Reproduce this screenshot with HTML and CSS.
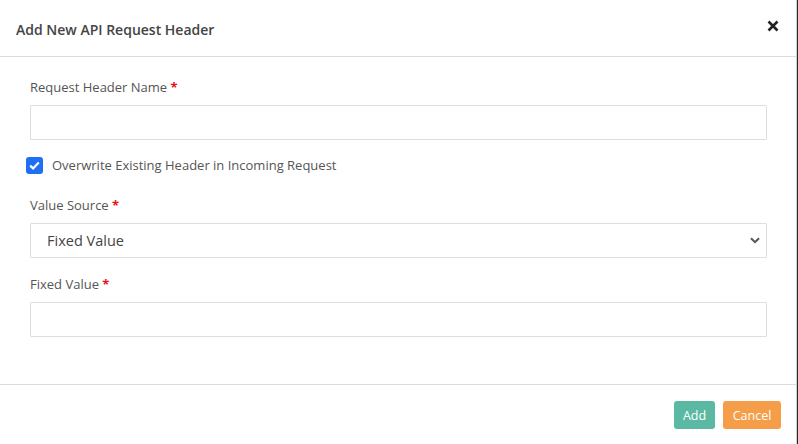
FILE: index.html
```html
<!DOCTYPE html>
<html>
<head>
<meta charset="utf-8">
<link rel="stylesheet" href="styles.css">
</head>
<body>
<div class="page">
  <div class="modal">
    <div class="modal-header">
      <h4 class="modal-title">Add New API Request Header</h4>
      <button class="close" aria-label="Close">
        <svg width="12" height="12" viewBox="0 0 12 12"><path d="M1.5 1.5 L10.5 10.5 M10.5 1.5 L1.5 10.5" stroke="#222" stroke-width="2.6" stroke-linecap="butt"/></svg>
      </button>
    </div>
    <div class="modal-body">
      <div class="field">
        <label class="label">Request Header Name <span class="req">*</span></label>
        <input class="control" type="text">
      </div>
      <label class="check">
        <span class="box"><svg width="11" height="9" viewBox="0 0 11 9"><path d="M1.2 4.6 L4.1 7.4 L9.8 1.5" fill="none" stroke="#fff" stroke-width="2.2"/></svg></span>
        <span>Overwrite Existing Header in Incoming Request</span>
      </label>
      <div class="field">
        <label class="label">Value Source <span class="req">*</span></label>
        <div class="select">
          <span>Fixed Value</span>
          <svg width="10" height="7" viewBox="0 0 10 7"><path d="M1 1.2 L5 5.2 L9 1.2" fill="none" stroke="#555" stroke-width="2"/></svg>
        </div>
      </div>
      <div class="field">
        <label class="label">Fixed Value <span class="req">*</span></label>
        <input class="control" type="text">
      </div>
    </div>
    <div class="modal-footer">
      <button class="btn btn-add">Add</button>
      <button class="btn btn-cancel">Cancel</button>
    </div>
  </div>
  <div class="backdrop"></div>
</div>
</body>
</html>
```
FILE: styles.css
```css
* { box-sizing: border-box; }
html, body { margin: 0; padding: 0; }
body {
  width: 798px;
  height: 444px;
  overflow: hidden;
  font-family: "Open Sans", "Liberation Sans", sans-serif;
  color: #555;
  background: #fff;
}
.page {
  display: flex;
  height: 444px;
}
.modal {
  width: 797px;
  height: 444px;
  background: #fff;
  border-right: 1px solid #cfcfcf;
  display: flex;
  flex-direction: column;
}
.backdrop {
  width: 1px;
  background: #2a2a2a;
}
.modal-header {
  height: 57px;
  border-bottom: 1px solid #dcdcdc;
  display: flex;
  align-items: center;
  justify-content: space-between;
  padding: 0 17px 0 16px;
}
.modal-title {
  margin: 0;
  font-size: 14px;
  font-weight: 600;
  color: #444;
  padding-top: 2px;
}
.close {
  border: 0;
  background: none;
  padding: 0;
  width: 12px;
  height: 12px;
  display: flex;
  margin-top: -4px;
}
.modal-body {
  flex: 1;
  padding: 21px 30px 0 30px;
}
.field {
  display: flex;
  flex-direction: column;
}
.label {
  font-size: 13px;
  line-height: 18px;
  color: #555;
  margin-bottom: 9px;
}
.req {
  color: #e8101a;
  font-weight: 700;
}
.control {
  width: 737px;
  height: 35px;
  border: 1px solid #dedede;
  border-radius: 1px;
  background: #fff;
  margin: 0;
}
.check {
  display: flex;
  align-items: center;
  gap: 9px;
  margin: 16px 0 0 -4px;
  font-size: 13px;
  line-height: 18px;
  color: #555;
  height: 18px;
}
.box {
  width: 17px;
  height: 17px;
  border-radius: 3px;
  background: #1f6ff2;
  display: flex;
  align-items: center;
  justify-content: center;
}
.check + .field { margin-top: 22px; }
.field + .field { margin-top: 17px; }
.select {
  width: 737px;
  height: 35px;
  border: 1px solid #dedede;
  border-radius: 1px;
  display: flex;
  align-items: center;
  justify-content: space-between;
  padding: 0 6px 0 16px;
  font-size: 14.5px;
  color: #444;
}
.modal-footer {
  height: 60px;
  border-top: 1px solid #dcdcdc;
  display: flex;
  justify-content: flex-end;
  align-items: flex-start;
  gap: 8px;
  padding: 16px 15px 0 0;
}
.btn {
  height: 28px;
  border: 0;
  border-radius: 3px;
  color: #fff;
  font-family: "Open Sans", "Liberation Sans", sans-serif;
  font-size: 12.5px;
  padding: 0 8px;
}
.btn-add { background: #5bb9a3; width: 41px; }
.btn-cancel { background: #f59d49; width: 58px; }
```
